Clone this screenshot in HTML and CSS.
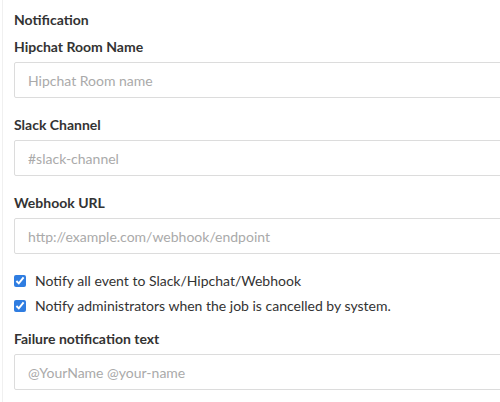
FILE: index.html
```html
<!DOCTYPE html>
<html>
<head>
<meta charset="utf-8">
<link rel="stylesheet" href="styles.css">
</head>
<body>
<div class="panel">
  <div class="title">Notification</div>
  <div class="field">
    <label class="label">Hipchat Room Name</label>
    <input class="input" type="text" placeholder="Hipchat Room name">
  </div>
  <div class="field">
    <label class="label">Slack Channel</label>
    <input class="input" type="text" placeholder="#slack-channel">
  </div>
  <div class="field">
    <label class="label">Webhook URL</label>
    <input class="input" type="text" placeholder="http://example.com/webhook/endpoint">
  </div>
  <div class="checks">
    <label class="check"><input type="checkbox" checked><span>Notify all event to Slack/Hipchat/Webhook</span></label>
    <label class="check"><input type="checkbox" checked><span>Notify administrators when the job is cancelled by system.</span></label>
  </div>
  <div class="field">
    <label class="label">Failure notification text</label>
    <input class="input" type="text" placeholder="@YourName @your-name">
  </div>
</div>
</body>
</html>
```
FILE: styles.css
```css
html, body {
  margin: 0;
  padding: 0;
  background: #fff;
}
body {
  font-family: Lato, "Open Sans", sans-serif;
  color: #333;
  width: 500px;
  height: 402px;
  overflow: hidden;
}
.panel {
  margin-left: 2px;
  border-left: 1px solid #f0f0f0;
  padding: 12px 0 0 11px;
  height: 402px;
  box-sizing: border-box;
  overflow: hidden;
}
.title {
  font-size: 14px;
  font-weight: 700;
  line-height: 16px;
  margin-bottom: 11px;
}
.field {
  display: flex;
  flex-direction: column;
  margin-bottom: 19px;
}
.label {
  font-size: 14px;
  font-weight: 700;
  line-height: 16px;
  margin-bottom: 7px;
}
.input {
  width: 520px;
  height: 36px;
  box-sizing: border-box;
  border: 1px solid #dcdcdc;
  border-radius: 2px;
  padding: 0 13px;
  font-family: inherit;
  font-size: 14px;
  color: #333;
  outline: none;
}
.input::placeholder {
  color: #aaa;
}
.checks {
  display: flex;
  flex-direction: column;
  gap: 9px;
  margin-top: 3px;
  margin-bottom: 17px;
}
.check {
  display: flex;
  align-items: center;
  gap: 9px;
  font-size: 14px;
  line-height: 16px;
  color: #333;
}
.check input {
  width: 12px;
  height: 12px;
  margin: 0;
  accent-color: #2f7de1;
}
```
